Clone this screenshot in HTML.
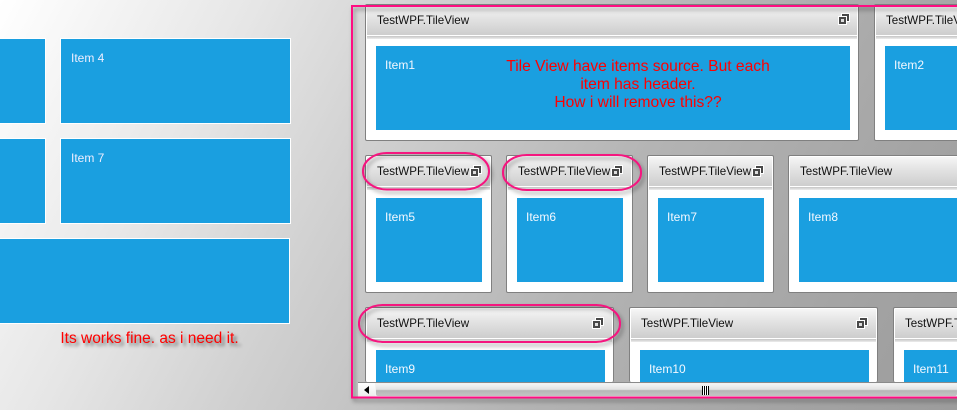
<!DOCTYPE html>
<html>
<head>
<meta charset="utf-8">
<style>
html,body{margin:0;padding:0;width:957px;height:410px;overflow:hidden}
#w{position:absolute;left:0;top:0;width:957px;height:410px;overflow:hidden;background:linear-gradient(118deg,#fff 0%,#e6e6e6 22%,#d0d0d0 38%,#b4b4b4 62%,#a4a4a4 85%,#9c9c9c 100%);font-family:"Liberation Sans",sans-serif}
.b{position:absolute;background:#1a9fe0}
.l{border:1px solid #fff;box-sizing:border-box;color:#eef;font-size:12px;padding:12px 0 0 10px;line-height:14px}
.t{position:absolute;background:#fff;border:1px solid #808080;border-radius:2px;box-sizing:border-box;overflow:hidden}
.h{position:absolute;left:1px;right:1px;top:1px;height:29px;background:linear-gradient(#f6f6f6,#e4e4e4 40%,#cdcdcd);color:#111;font-size:11.6px;line-height:29px;padding-left:10px;white-space:nowrap}
.h2{position:absolute;left:1px;right:1px;top:31px;height:3px;background:linear-gradient(#c4c4c4,#ececec)}
.i{position:absolute;background:#1a9fe0;color:#f4f8ff;font-size:12px;line-height:14px;padding:12px 0 0 9px;box-sizing:border-box}
.d .h{line-height:30px}
.e{border-bottom:0;height:75px}
.e .i{height:32px}
.ic{position:absolute;width:12px;height:12px}
.r{position:absolute;color:#f00;line-height:18px;text-align:center;white-space:nowrap}
</style>
</head>
<body>
<div id="w">
<svg width="0" height="0" style="position:absolute"><symbol id="ico" viewBox="0 0 12 12"><rect x="3" y="0" width="9" height="9" fill="#fff"/><rect x="4" y="1" width="7" height="7" fill="#484848"/><rect x="6" y="3" width="3" height="3" fill="#ddd"/><rect x="0" y="3" width="9" height="9" fill="#fff"/><rect x="1" y="4" width="7" height="7" fill="#484848"/><rect x="3" y="6" width="3" height="3" fill="#ddd"/></symbol></svg>

<div class="b" style="left:-2px;top:38px;width:48px;height:86px;border:1px solid #fff;box-sizing:border-box"></div>
<div class="b l" style="left:60px;top:38px;width:231px;height:86px">Item 4</div>
<div class="b" style="left:-2px;top:138px;width:48px;height:86px;border:1px solid #fff;box-sizing:border-box"></div>
<div class="b l" style="left:60px;top:138px;width:231px;height:86px">Item 7</div>
<div class="b" style="left:-2px;top:238px;width:292px;height:86px;border:1px solid #fff;box-sizing:border-box"></div>
<div class="r" style="left:0;top:330px;width:299px;font-size:15.5px;text-shadow:3px 3px 3px rgba(0,0,0,.5)">Its works fine. as i need it.</div>

<div style="position:absolute;left:353px;top:3px;width:604px;height:379px;overflow:hidden">
<div class="t" style="left:12px;top:1px;width:494px;height:137px"><div class="h">TestWPF.TileView</div><div class="h2"></div><div class="i" style="left:10px;top:41px;width:474px;height:84px">Item1</div>
<svg class="ic" style="left:472px;top:8px"><use href="#ico"/></svg></div>
<div class="t" style="left:521px;top:1px;width:200px;height:137px"><div class="h">TestWPF.TileView</div><div class="h2"></div><div class="i" style="left:10px;top:41px;width:180px;height:84px">Item2</div></div>

<div class="t d" style="left:12px;top:152px;width:127px;height:138px"><div class="h">TestWPF.TileView</div><div class="h2"></div><div class="i" style="left:10px;top:42px;width:106px;height:84px">Item5</div>
<svg class="ic" style="left:104px;top:9px"><use href="#ico"/></svg></div>
<div class="t d" style="left:153px;top:152px;width:127px;height:138px"><div class="h">TestWPF.TileView</div><div class="h2"></div><div class="i" style="left:10px;top:42px;width:106px;height:84px">Item6</div>
<svg class="ic" style="left:104px;top:9px"><use href="#ico"/></svg></div>
<div class="t d" style="left:294px;top:152px;width:127px;height:138px"><div class="h">TestWPF.TileView</div><div class="h2"></div><div class="i" style="left:10px;top:42px;width:106px;height:84px">Item7</div>
<svg class="ic" style="left:104px;top:9px"><use href="#ico"/></svg></div>
<div class="t d" style="left:435px;top:152px;width:220px;height:138px"><div class="h">TestWPF.TileView</div><div class="h2"></div><div class="i" style="left:10px;top:42px;width:200px;height:84px">Item8</div></div>

<div class="t d e" style="left:12px;top:304px;width:249px"><div class="h">TestWPF.TileView</div><div class="h2"></div><div class="i" style="left:10px;top:42px;width:229px">Item9</div>
<svg class="ic" style="left:226px;top:9px"><use href="#ico"/></svg></div>
<div class="t d e" style="left:276px;top:304px;width:249px"><div class="h">TestWPF.TileView</div><div class="h2"></div><div class="i" style="left:10px;top:42px;width:229px">Item10</div>
<svg class="ic" style="left:226px;top:9px"><use href="#ico"/></svg></div>
<div class="t d e" style="left:540px;top:304px;width:249px"><div class="h">TestWPF.TileView</div><div class="h2"></div><div class="i" style="left:10px;top:42px;width:229px">Item11</div></div>
</div>

<div class="r" style="left:478px;top:58px;width:320px;font-size:15.6px">Tile View have items source. But each<br>item has header.<br>How i will remove this??</div>

<div style="position:absolute;left:358px;top:382px;width:599px;height:15px;background:#f2f2f2;border-top:1px solid #8a8a8a;box-sizing:border-box">
<div style="position:absolute;left:0;top:0;width:17px;height:14px;background:linear-gradient(#fff,#ececec)"></div>
<div style="position:absolute;left:6px;top:3px;width:0;height:0;border:4px solid transparent;border-right:5px solid #000;border-left:0"></div>
<div style="position:absolute;left:18px;top:1px;right:0;height:12px;background:linear-gradient(#f4f4f4,#e2e2e2 45%,#b6b6b6 55%,#c4c4c4);border-radius:2px"></div>
<div style="position:absolute;left:344px;top:3px;width:7px;height:9px;background:repeating-linear-gradient(90deg,#000 0 1px,#fff 1px 2px)"></div>
</div>

<svg style="position:absolute;left:0;top:0" width="957" height="410">
<defs>
<filter id="s" x="-10%" y="-30%" width="120%" height="170%"><feDropShadow dx="2" dy="3" stdDeviation="2" flood-color="#000" flood-opacity=".4"/></filter>
<filter id="p" x="-5%" y="-5%" width="110%" height="110%"><feDropShadow dx="2" dy="3" stdDeviation="2" flood-color="#000" flood-opacity=".4"/></filter>
</defs>
<rect x="352" y="6" width="640" height="391.500" fill="none" stroke="#ff0a82" stroke-width="2" filter="url(#p)"/>
<g fill="none" stroke="#f5127f" stroke-width="2" filter="url(#s)">
<rect x="363" y="153" width="126" height="36.500" rx="24" ry="18"/>
<rect x="503" y="155" width="138" height="35" rx="24" ry="17"/>
<rect x="359" y="305" width="261" height="37" rx="24" ry="18"/>
</g>
</svg>
</div>
</body>
</html>
